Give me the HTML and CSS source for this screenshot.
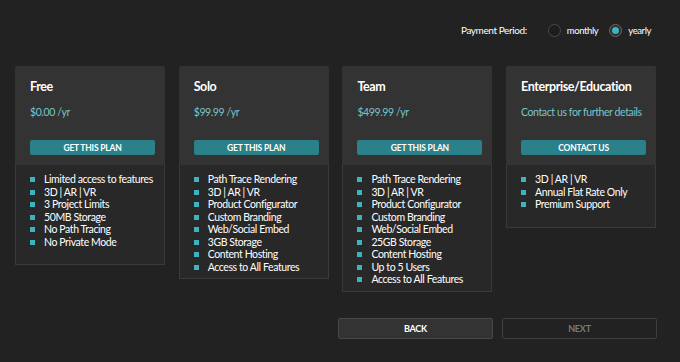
FILE: index.html
```html
<!DOCTYPE html>
<html lang="en">
<head>
    <meta charset="UTF-8">
    <meta name="viewport" content="width=device-width, initial-scale=1.0">
    <title>Choose a Plan</title>
    <link rel="stylesheet" href="styles.css">
</head>
<body>
    <!-- Payment period -->
    <div class="period">
        <span class="period-label">Payment Period:</span>
        <label class="radio"><span class="dot"></span>monthly</label>
        <label class="radio checked"><span class="dot"></span>yearly</label>
    </div>

    <!-- Plans -->
    <div class="plans">
        <div class="plan">
            <div class="plan-head">
                <h2>Free</h2>
                <p class="price">$0.00 /yr</p>
                <button class="plan-btn">Get this plan</button>
            </div>
            <ul class="features">
                <li>Limited access to features</li>
                <li>3D | AR | VR</li>
                <li>3 Project Limits</li>
                <li>50MB Storage</li>
                <li>No Path Tracing</li>
                <li>No Private Mode</li>
            </ul>
        </div>
        <div class="plan">
            <div class="plan-head">
                <h2>Solo</h2>
                <p class="price">$99.99 /yr</p>
                <button class="plan-btn">Get this plan</button>
            </div>
            <ul class="features long">
                <li>Path Trace Rendering</li>
                <li>3D | AR | VR</li>
                <li>Product Configurator</li>
                <li>Custom Branding</li>
                <li>Web/Social Embed</li>
                <li>3GB Storage</li>
                <li>Content Hosting</li>
                <li>Access to All Features</li>
            </ul>
        </div>
        <div class="plan">
            <div class="plan-head">
                <h2>Team</h2>
                <p class="price">$499.99 /yr</p>
                <button class="plan-btn">Get this plan</button>
            </div>
            <ul class="features long">
                <li>Path Trace Rendering</li>
                <li>3D | AR | VR</li>
                <li>Product Configurator</li>
                <li>Custom Branding</li>
                <li>Web/Social Embed</li>
                <li>25GB Storage</li>
                <li>Content Hosting</li>
                <li>Up to 5 Users</li>
                <li>Access to All Features</li>
            </ul>
        </div>
        <div class="plan">
            <div class="plan-head">
                <h2>Enterprise/Education</h2>
                <p class="price">Contact us for further details</p>
                <button class="plan-btn">Contact us</button>
            </div>
            <ul class="features">
                <li>3D | AR | VR</li>
                <li>Annual Flat Rate Only</li>
                <li>Premium Support</li>
            </ul>
        </div>
    </div>

    <!-- Navigation -->
    <div class="nav">
        <button class="nav-btn">Back</button>
        <button class="nav-btn disabled">Next</button>
    </div>
</body>
</html>
```
FILE: styles.css
```css
body {
    margin: 0;
    background-color: #222;
    color: #fff;
    font-family: Lato, "Open Sans", sans-serif;
    letter-spacing: -0.4px;
}

.period {
    display: flex;
    align-items: center;
    justify-content: flex-end;
    padding: 23px 29px 0 0;
    height: 14px;
    font-size: 10px;
}

.period-label {
    margin-right: 21px;
}

.radio {
    display: flex;
    align-items: center;
    font-size: 9.5px;
}

.radio .dot {
    width: 11px;
    height: 11px;
    border: 1px solid #4a4a4a;
    border-radius: 50%;
    background-color: #1d1d1d;
    margin-right: 6px;
    display: flex;
    align-items: center;
    justify-content: center;
}

.radio + .radio {
    margin-left: 11px;
}

.radio.checked .dot {
    border-color: #6a6a6a;
    background-color: #2e2e2e;
}

.radio.checked .dot::after {
    content: "";
    width: 7px;
    height: 7px;
    border-radius: 50%;
    background-color: #3bb4bf;
}

.plans {
    display: grid;
    grid-template-columns: repeat(4, 150px);
    column-gap: 13.7px;
    align-items: start;
    margin: 29px 0 0 15px;
}

.plan-head {
    background-color: #333;
    padding: 13px 8px 10px 15px;
    border-radius: 2px 2px 0 0;
}

.plan-head h2 {
    margin: 0;
    font-size: 12.5px;
    line-height: 16px;
    font-weight: bold;
}

.price {
    margin: 10px 0 0;
    font-size: 10.5px;
    line-height: 14px;
    color: #76c6cb;
}

.plan-btn {
    display: block;
    width: 125px;
    height: 15px;
    margin-top: 21px;
    padding: 0;
    border: none;
    border-radius: 2px;
    background-color: #2b818a;
    color: #fff;
    font-family: inherit;
    font-size: 8.5px;
    font-weight: bold;
    letter-spacing: -0.2px;
    text-transform: uppercase;
}

.features {
    list-style: none;
    margin: 0;
    padding: 8px 0 16px 0;
    background-color: #282828;
    border: 1px solid #3a3a3a;
    border-top: none;
    font-size: 10.5px;
    line-height: 12.5px;
}

.features.long {
    padding-bottom: 5px;
}

.features li {
    position: relative;
    padding-left: 28px;
}

.features li::before {
    content: "";
    position: absolute;
    left: 14px;
    top: 4px;
    width: 5px;
    height: 5px;
    background-color: #3bb4bf;
}

.nav {
    display: flex;
    justify-content: flex-end;
    gap: 9px;
    margin: 26px 23px 0 0;
}

.nav-btn {
    width: 155px;
    height: 21px;
    padding: 0;
    border: 1px solid #484848;
    border-radius: 2px;
    background-color: #333;
    color: #fff;
    font-family: inherit;
    font-size: 9px;
    font-weight: bold;
    letter-spacing: -0.2px;
    text-transform: uppercase;
}

.nav-btn.disabled {
    background-color: #222;
    border-color: #3e3e3e;
    color: #7a7a7a;
}
```
